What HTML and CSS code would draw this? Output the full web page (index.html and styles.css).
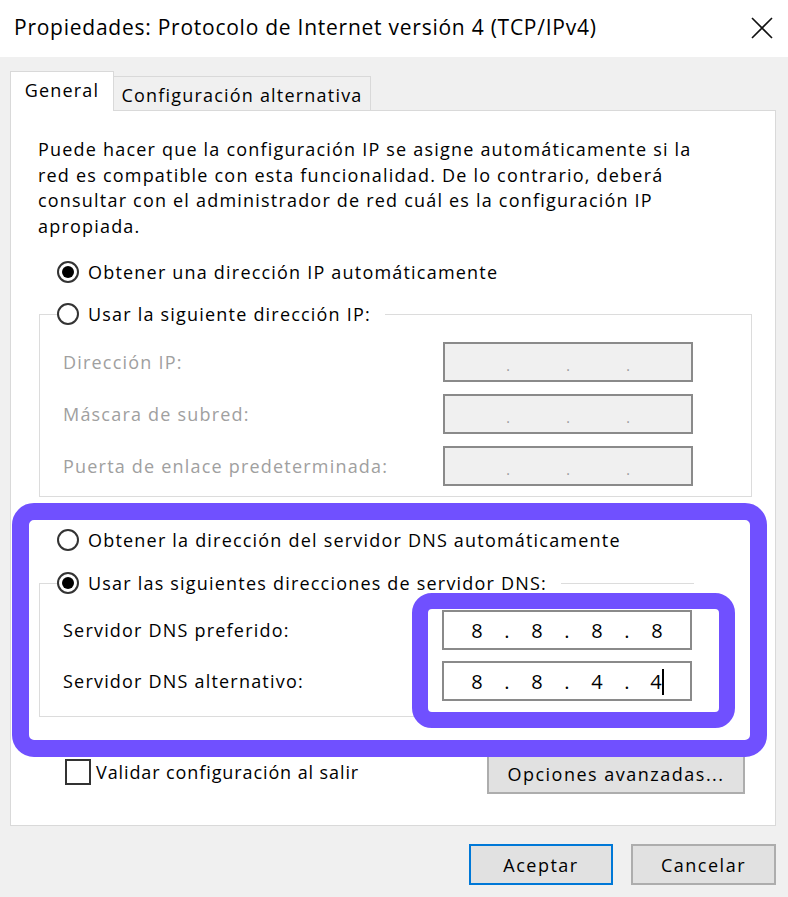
FILE: index.html
```html
<!DOCTYPE html>
<html lang="es">
<head>
<meta charset="utf-8">
<title>Propiedades: Protocolo de Internet versión 4 (TCP/IPv4)</title>
<link rel="stylesheet" href="styles.css">
</head>
<body>
<div class="titlebar">
  <span class="title">Propiedades: Protocolo de Internet versión 4 (TCP/IPv4)</span>
  <svg class="close" width="24" height="24" viewBox="0 0 24 24"><path d="M2 2 L22 22 M22 2 L2 22" stroke="#111" stroke-width="1.6" fill="none"/></svg>
</div>
<div class="dialog">
  <div class="tabs">
    <div class="tab tab-active">General</div>
    <div class="tab tab-alt">Configuración alternativa</div>
  </div>
  <div class="panel">
    <p class="intro">Puede hacer que la configuración IP se asigne automáticamente si la<br>red es compatible con esta funcionalidad. De lo contrario, deberá<br>consultar con el administrador de red cuál es la configuración IP<br>apropiada.</p>

    <div class="opt opt-ip-auto"><span class="radio radio-on"></span><span>Obtener una dirección IP automáticamente</span></div>

    <div class="group group-ip">
      <div class="legend"><span class="radio"></span><span>Usar la siguiente dirección IP:</span></div>
      <div class="field field-disabled">
        <span class="label">Dirección IP:</span>
        <div class="ipbox ipbox-disabled"><span class="oct"></span><span class="dot">.</span><span class="oct"></span><span class="dot">.</span><span class="oct"></span><span class="dot">.</span><span class="oct"></span></div>
      </div>
      <div class="field field-disabled">
        <span class="label">Máscara de subred:</span>
        <div class="ipbox ipbox-disabled"><span class="oct"></span><span class="dot">.</span><span class="oct"></span><span class="dot">.</span><span class="oct"></span><span class="dot">.</span><span class="oct"></span></div>
      </div>
      <div class="field field-disabled">
        <span class="label">Puerta de enlace predeterminada:</span>
        <div class="ipbox ipbox-disabled"><span class="oct"></span><span class="dot">.</span><span class="oct"></span><span class="dot">.</span><span class="oct"></span><span class="dot">.</span><span class="oct"></span></div>
      </div>
    </div>

    <div class="opt opt-dns-auto"><span class="radio"></span><span>Obtener la dirección del servidor DNS automáticamente</span></div>

    <div class="group group-dns">
      <div class="legend"><span class="radio radio-on"></span><span>Usar las siguientes direcciones de servidor DNS:</span></div>
      <div class="field field-dns-1">
        <span class="label">Servidor DNS preferido:</span>
        <div class="ipbox"><span class="oct">8</span><span class="dot">.</span><span class="oct">8</span><span class="dot">.</span><span class="oct">8</span><span class="dot">.</span><span class="oct">8</span></div>
      </div>
      <div class="field field-dns-2">
        <span class="label">Servidor DNS alternativo:</span>
        <div class="ipbox"><span class="oct">8</span><span class="dot">.</span><span class="oct">8</span><span class="dot">.</span><span class="oct">4</span><span class="dot">.</span><span class="oct"><span class="caret">4</span></span></div>
      </div>
    </div>

    <div class="bottom-row">
      <div class="check"><span class="checkbox"></span><span>Validar configuración al salir</span></div>
      <button class="btn btn-adv" type="button">Opciones avanzadas...</button>
    </div>
  </div>
  <div class="footer">
    <button class="btn btn-ok" type="button">Aceptar</button>
    <button class="btn btn-cancel" type="button">Cancelar</button>
  </div>
</div>
<div class="highlight hl-dns"></div>
<div class="highlight hl-values"></div>
</body>
</html>
```
FILE: styles.css
```css
* { box-sizing: border-box; }
html, body { margin: 0; padding: 0; }
body {
  width: 788px;
  height: 897px;
  background: #f0f0f0;
  font-family: "Open Sans", "Noto Sans", "Liberation Sans", sans-serif;
  font-size: 18px;
  letter-spacing: 1.2px;
  color: #000;
  position: relative;
  overflow: hidden;
}

.titlebar {
  height: 57px;
  background: #fff;
  display: flex;
  align-items: center;
  justify-content: space-between;
  padding: 0 14px 4px 14px;
}
.title { font-size: 21px; color: #000; letter-spacing: 0.75px; }
.close { margin-right: 0; margin-top: 2px; }

.dialog { padding: 0 12px 0 10px; }

.tabs {
  display: flex;
  align-items: flex-end;
  margin-top: 14px;
  height: 39px;
}
.tab {
  display: flex;
  align-items: center;
  justify-content: center;
  border: 1px solid #d9d9d9;
  border-bottom: none;
}
.tab-active {
  width: 104px;
  height: 40px;
  background: #fff;
  position: relative;
  z-index: 2;
  margin-bottom: -1px;
  padding-bottom: 3px;
}
.tab-alt {
  width: 258px;
  height: 34px;
  background: #f0f0f0;
  margin-left: -1px;
  padding-top: 2px;
}

.panel {
  height: 716px;
  background: #fff;
  border: 1px solid #d9d9d9;
  display: flex;
  flex-direction: column;
}

.intro {
  margin: 0;
  padding: 26px 0 0 27px;
  line-height: 25.5px;
  white-space: nowrap;
}

.opt, .legend {
  display: flex;
  align-items: center;
  height: 30px;
  white-space: nowrap;
}
.opt { margin-left: 46px; }
.opt-ip-auto { margin-top: 18px; }
.opt-dns-auto { margin-top: 28px; }

.radio {
  width: 22px;
  height: 22px;
  border: 2px solid #333;
  border-radius: 50%;
  margin-right: 9px;
  flex: none;
  position: relative;
  background: #fff;
}
.radio-on::after {
  content: "";
  position: absolute;
  left: 3px; top: 3px;
  width: 12px; height: 12px;
  border-radius: 50%;
  background: #000;
}

.group {
  margin-left: 28px;
  border: 1px solid #dcdcdc;
  display: flex;
  flex-direction: column;
}
.group-ip {
  margin-top: 27px;
  margin-right: 23px;
  padding: 0 58px 10px 0;
  gap: 12px;
}
.group-dns {
  margin-top: 28px;
  margin-right: 81px;
  border-right: none;
  padding: 0 2px 15px 0;
  gap: 11px;
}
.legend {
  margin-top: -16px;
  margin-left: 17px;
  width: fit-content;
  background: #fff;
  padding-right: 14px;
  margin-bottom: 1px;
}

.field {
  display: grid;
  grid-template-columns: 1fr 250px;
  align-items: center;
  height: 40px;
  padding-left: 23px;
  white-space: nowrap;
}
.field-disabled .label { color: #a0a0a0; }

.ipbox {
  height: 40px;
  border: 2px solid #8a8a8a;
  background: #fff;
  display: flex;
  align-items: center;
  padding-left: 8px;
  font-size: 20px;
  letter-spacing: 0;
}
.ipbox-disabled { background: #f0f0f0; }
.oct { width: 50px; text-align: center; }
.dot { width: 10px; text-align: center; }
.ipbox-disabled .dot { color: #9a9a9a; font-size: 14px; padding-top: 6px; }

.caret {
  border-right: 2px solid #000;
  display: inline-block;
  line-height: 26px;
}

.bottom-row {
  margin-top: 37px;
  height: 40px;
  display: flex;
  align-items: center;
  justify-content: space-between;
  padding: 0 30px 0 54px;
}
.check {
  display: flex;
  align-items: center;
  margin-top: -4px;
  white-space: nowrap;
  letter-spacing: 0.9px;
}
.checkbox {
  width: 26px;
  height: 26px;
  border: 2px solid #333;
  background: #fff;
  margin-right: 5px;
  flex: none;
}

.btn {
  font-family: inherit;
  font-size: 18px;
  letter-spacing: 1.5px;
  color: #000;
  background: #e1e1e1;
  border: 2px solid #adadad;
  height: 41px;
  padding: 0;
}
.btn-adv { width: 258px; height: 40px; }

.footer {
  display: flex;
  justify-content: flex-end;
  gap: 18px;
  margin-top: 18px;
}
.btn-ok { width: 144px; border-color: #0078d7; }
.btn-cancel { width: 145px; }

.highlight {
  position: absolute;
  border: 17px solid #7050ff;
  pointer-events: none;
}
.hl-dns {
  left: 12px; top: 503px;
  width: 755px; height: 254px;
  border-radius: 22px;
}
.hl-values {
  left: 412px; top: 593px;
  width: 323px; height: 135px;
  border-width: 16px;
  border-radius: 20px;
}
```
